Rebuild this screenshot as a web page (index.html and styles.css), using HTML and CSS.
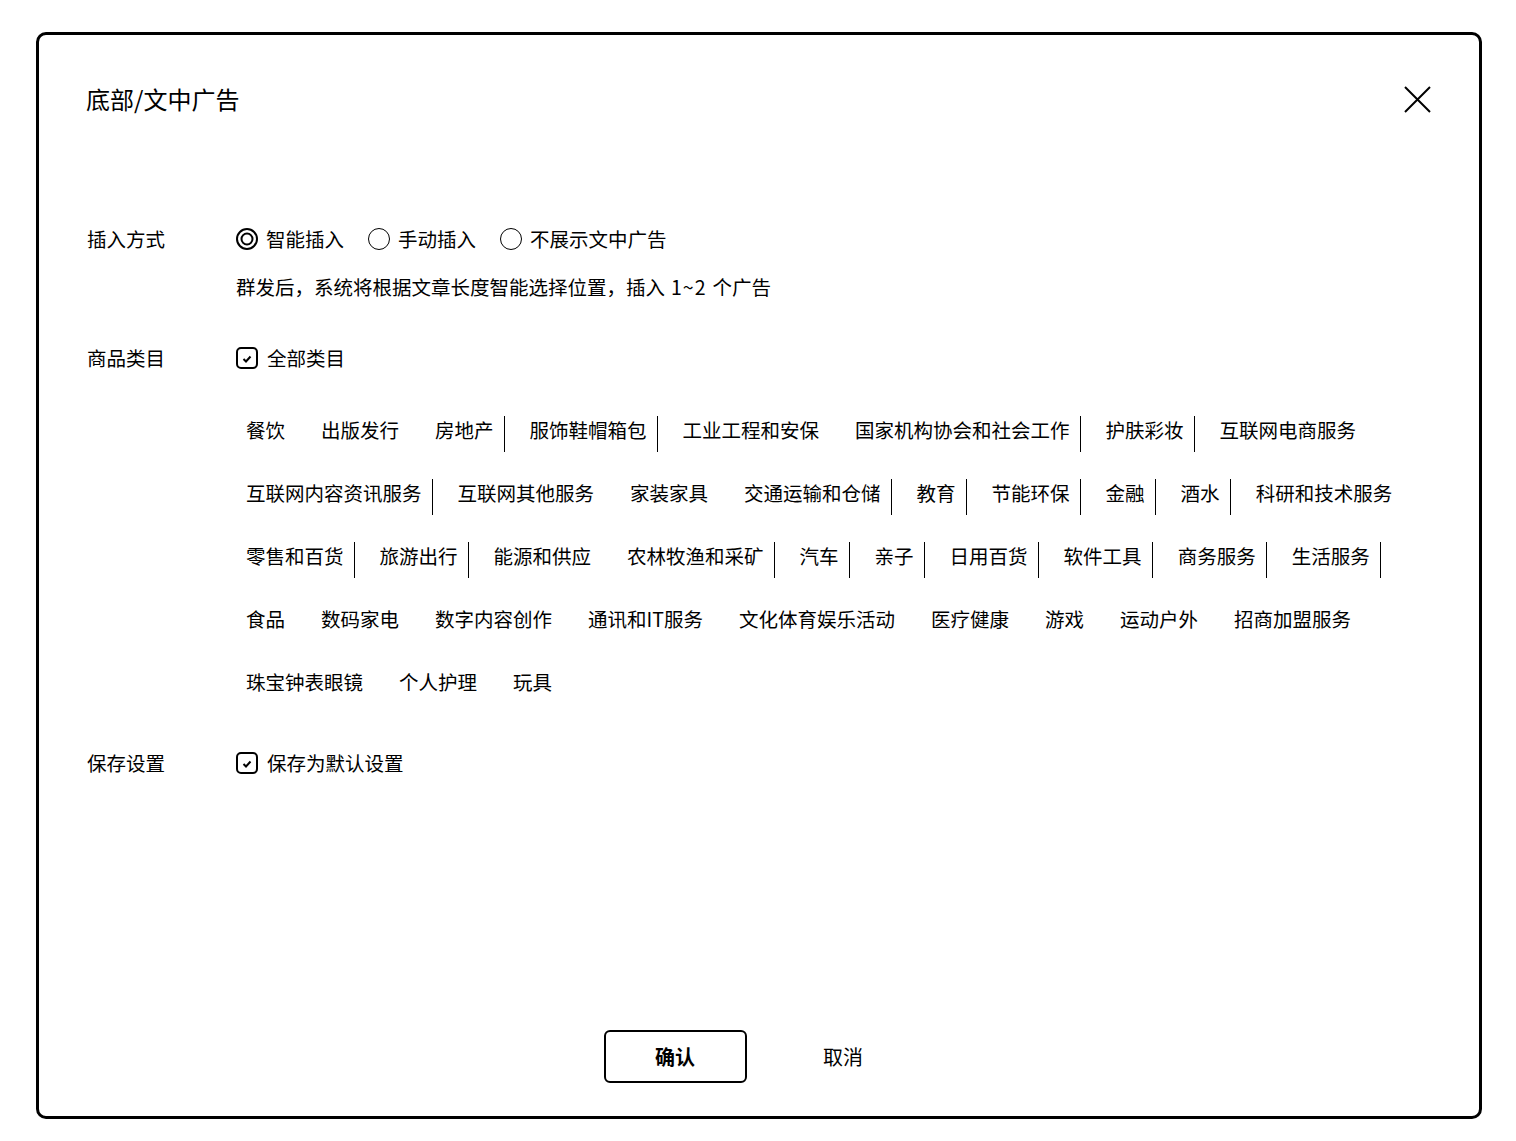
FILE: index.html
```html
<!DOCTYPE html>
<html lang="zh-CN">
<head>
<meta charset="utf-8">
<title>底部/文中广告</title>
<link rel="stylesheet" href="styles.css">
</head>
<body>
<div class="dialog">
  <div class="header">
    <div class="title">底部/文中广告</div>
    <svg class="close" width="27" height="27" viewBox="0 0 27 27"><path d="M1 1 L26 26 M26 1 L1 26" stroke="#000" stroke-width="2" fill="none"/></svg>
  </div>

  <div class="form">
    <div class="row row-insert">
      <div class="label">插入方式</div>
      <div class="content">
        <div class="radios">
          <div class="opt">
            <svg class="radio" width="22" height="22" viewBox="0 0 22 22"><circle cx="11" cy="11" r="10" fill="none" stroke="#000" stroke-width="2"/><circle cx="11" cy="11" r="5.5" fill="none" stroke="#000" stroke-width="2"/></svg>
            <span>智能插入</span>
          </div>
          <div class="opt">
            <svg class="radio" width="22" height="22" viewBox="0 0 22 22"><circle cx="11" cy="11" r="10.5" fill="none" stroke="#000" stroke-width="1"/></svg>
            <span>手动插入</span>
          </div>
          <div class="opt">
            <svg class="radio" width="22" height="22" viewBox="0 0 22 22"><circle cx="11" cy="11" r="10.5" fill="none" stroke="#000" stroke-width="1"/></svg>
            <span>不展示文中广告</span>
          </div>
        </div>
        <div class="desc">群发后，系统将根据文章长度智能选择位置，插入<span class="num">1~2</span>个广告</div>
      </div>
    </div>

    <div class="row row-cat">
      <div class="label">商品类目</div>
      <div class="content">
        <div class="opt">
          <svg class="check" width="22" height="22" viewBox="0 0 22 22"><rect x="1" y="1" width="20" height="20" rx="4" fill="none" stroke="#000" stroke-width="2"/><path d="M7.5 12 L10 14.5 L14.5 9.5" fill="none" stroke="#000" stroke-width="2"/></svg>
          <span>全部类目</span>
        </div>
        <div class="tags">
          <span class="tag">餐饮</span>
          <span class="tag">出版发行</span>
          <span class="tag sep">房地产</span>
          <span class="tag sep">服饰鞋帽箱包</span>
          <span class="tag">工业工程和安保</span>
          <span class="tag sep">国家机构协会和社会工作</span>
          <span class="tag sep">护肤彩妆</span>
          <span class="tag">互联网电商服务</span>
          <span class="tag sep">互联网内容资讯服务</span>
          <span class="tag">互联网其他服务</span>
          <span class="tag">家装家具</span>
          <span class="tag sep">交通运输和仓储</span>
          <span class="tag sep">教育</span>
          <span class="tag sep">节能环保</span>
          <span class="tag sep">金融</span>
          <span class="tag sep">酒水</span>
          <span class="tag">科研和技术服务</span>
          <span class="tag sep">零售和百货</span>
          <span class="tag sep">旅游出行</span>
          <span class="tag">能源和供应</span>
          <span class="tag sep">农林牧渔和采矿</span>
          <span class="tag sep">汽车</span>
          <span class="tag sep">亲子</span>
          <span class="tag sep">日用百货</span>
          <span class="tag sep">软件工具</span>
          <span class="tag sep">商务服务</span>
          <span class="tag sep">生活服务</span>
          <span class="tag">食品</span>
          <span class="tag">数码家电</span>
          <span class="tag">数字内容创作</span>
          <span class="tag">通讯和IT服务</span>
          <span class="tag">文化体育娱乐活动</span>
          <span class="tag">医疗健康</span>
          <span class="tag">游戏</span>
          <span class="tag">运动户外</span>
          <span class="tag">招商加盟服务</span>
          <span class="tag">珠宝钟表眼镜</span>
          <span class="tag">个人护理</span>
          <span class="tag">玩具</span>
        </div>
      </div>
    </div>

    <div class="row row-save">
      <div class="label">保存设置</div>
      <div class="content">
        <div class="opt">
          <svg class="check" width="22" height="22" viewBox="0 0 22 22"><rect x="1" y="1" width="20" height="20" rx="4" fill="none" stroke="#000" stroke-width="2"/><path d="M7.5 12 L10 14.5 L14.5 9.5" fill="none" stroke="#000" stroke-width="2"/></svg>
          <span>保存为默认设置</span>
        </div>
      </div>
    </div>
  </div>

  <div class="footer">
    <button class="btn btn-primary">确认</button>
    <button class="btn btn-plain">取消</button>
  </div>
</div>
</body>
</html>
```

FILE: styles.css
```css
html, body {
  margin: 0;
  padding: 0;
  background: #fff;
}

body {
  font-family: "Noto Sans CJK SC", "Noto Sans", sans-serif;
  color: #000;
  font-size: 19.5px;
}

.dialog {
  box-sizing: border-box;
  margin: 32px 0 0 36px;
  width: 1446px;
  height: 1087px;
  border: 3px solid #000;
  border-radius: 10px;
  padding: 48px 48px 33px 48px;
  display: flex;
  flex-direction: column;
}

.header {
  display: flex;
  align-items: center;
  justify-content: space-between;
  height: 32px;
}

.title {
  font-size: 24px;
  line-height: 32px;
  margin-left: -1px;
}

.close {
  display: block;
}

.form {
  margin-top: 110px;
  display: flex;
  flex-direction: column;
}

.row {
  display: flex;
  line-height: 28px;
}

.row-cat {
  margin-top: 43px;
}

.row-save {
  margin-top: 45px;
}

.label {
  width: 149px;
  flex: none;
}

.content {
  flex: 1;
  display: flex;
  flex-direction: column;
  align-items: flex-start;
}

.radios {
  display: flex;
  gap: 24px;
}

.opt {
  display: flex;
  align-items: center;
  gap: 9px;
}

.radio, .check {
  display: block;
  flex: none;
}

.opt .radio + span {
  margin-left: -1px;
}

.desc {
  margin-top: 20px;
}

.desc .num {
  padding: 0 6px;
  letter-spacing: 1px;
}

.tags {
  margin-top: 44px;
  display: flex;
  flex-wrap: wrap;
  column-gap: 15px;
  row-gap: 27px;
  width: 100%;
}

.tag {
  display: block;
  line-height: 28px;
  padding: 0 10px 8px 10px;
  border-right: 1px solid transparent;
  white-space: nowrap;
}

.tag.sep {
  border-right-color: #000;
}

.footer {
  margin-top: auto;
  display: flex;
  justify-content: center;
  gap: 25px;
}

.btn {
  box-sizing: border-box;
  width: 143px;
  height: 53px;
  font-family: "Noto Sans CJK SC", "Noto Sans", sans-serif;
  font-size: 20px;
  color: #000;
  background: #fff;
  border-radius: 6px;
  cursor: pointer;
  padding: 0;
}

.btn-primary {
  border: 2px solid #000;
  font-weight: bold;
}

.btn-plain {
  border: 2px solid transparent;
}
```
